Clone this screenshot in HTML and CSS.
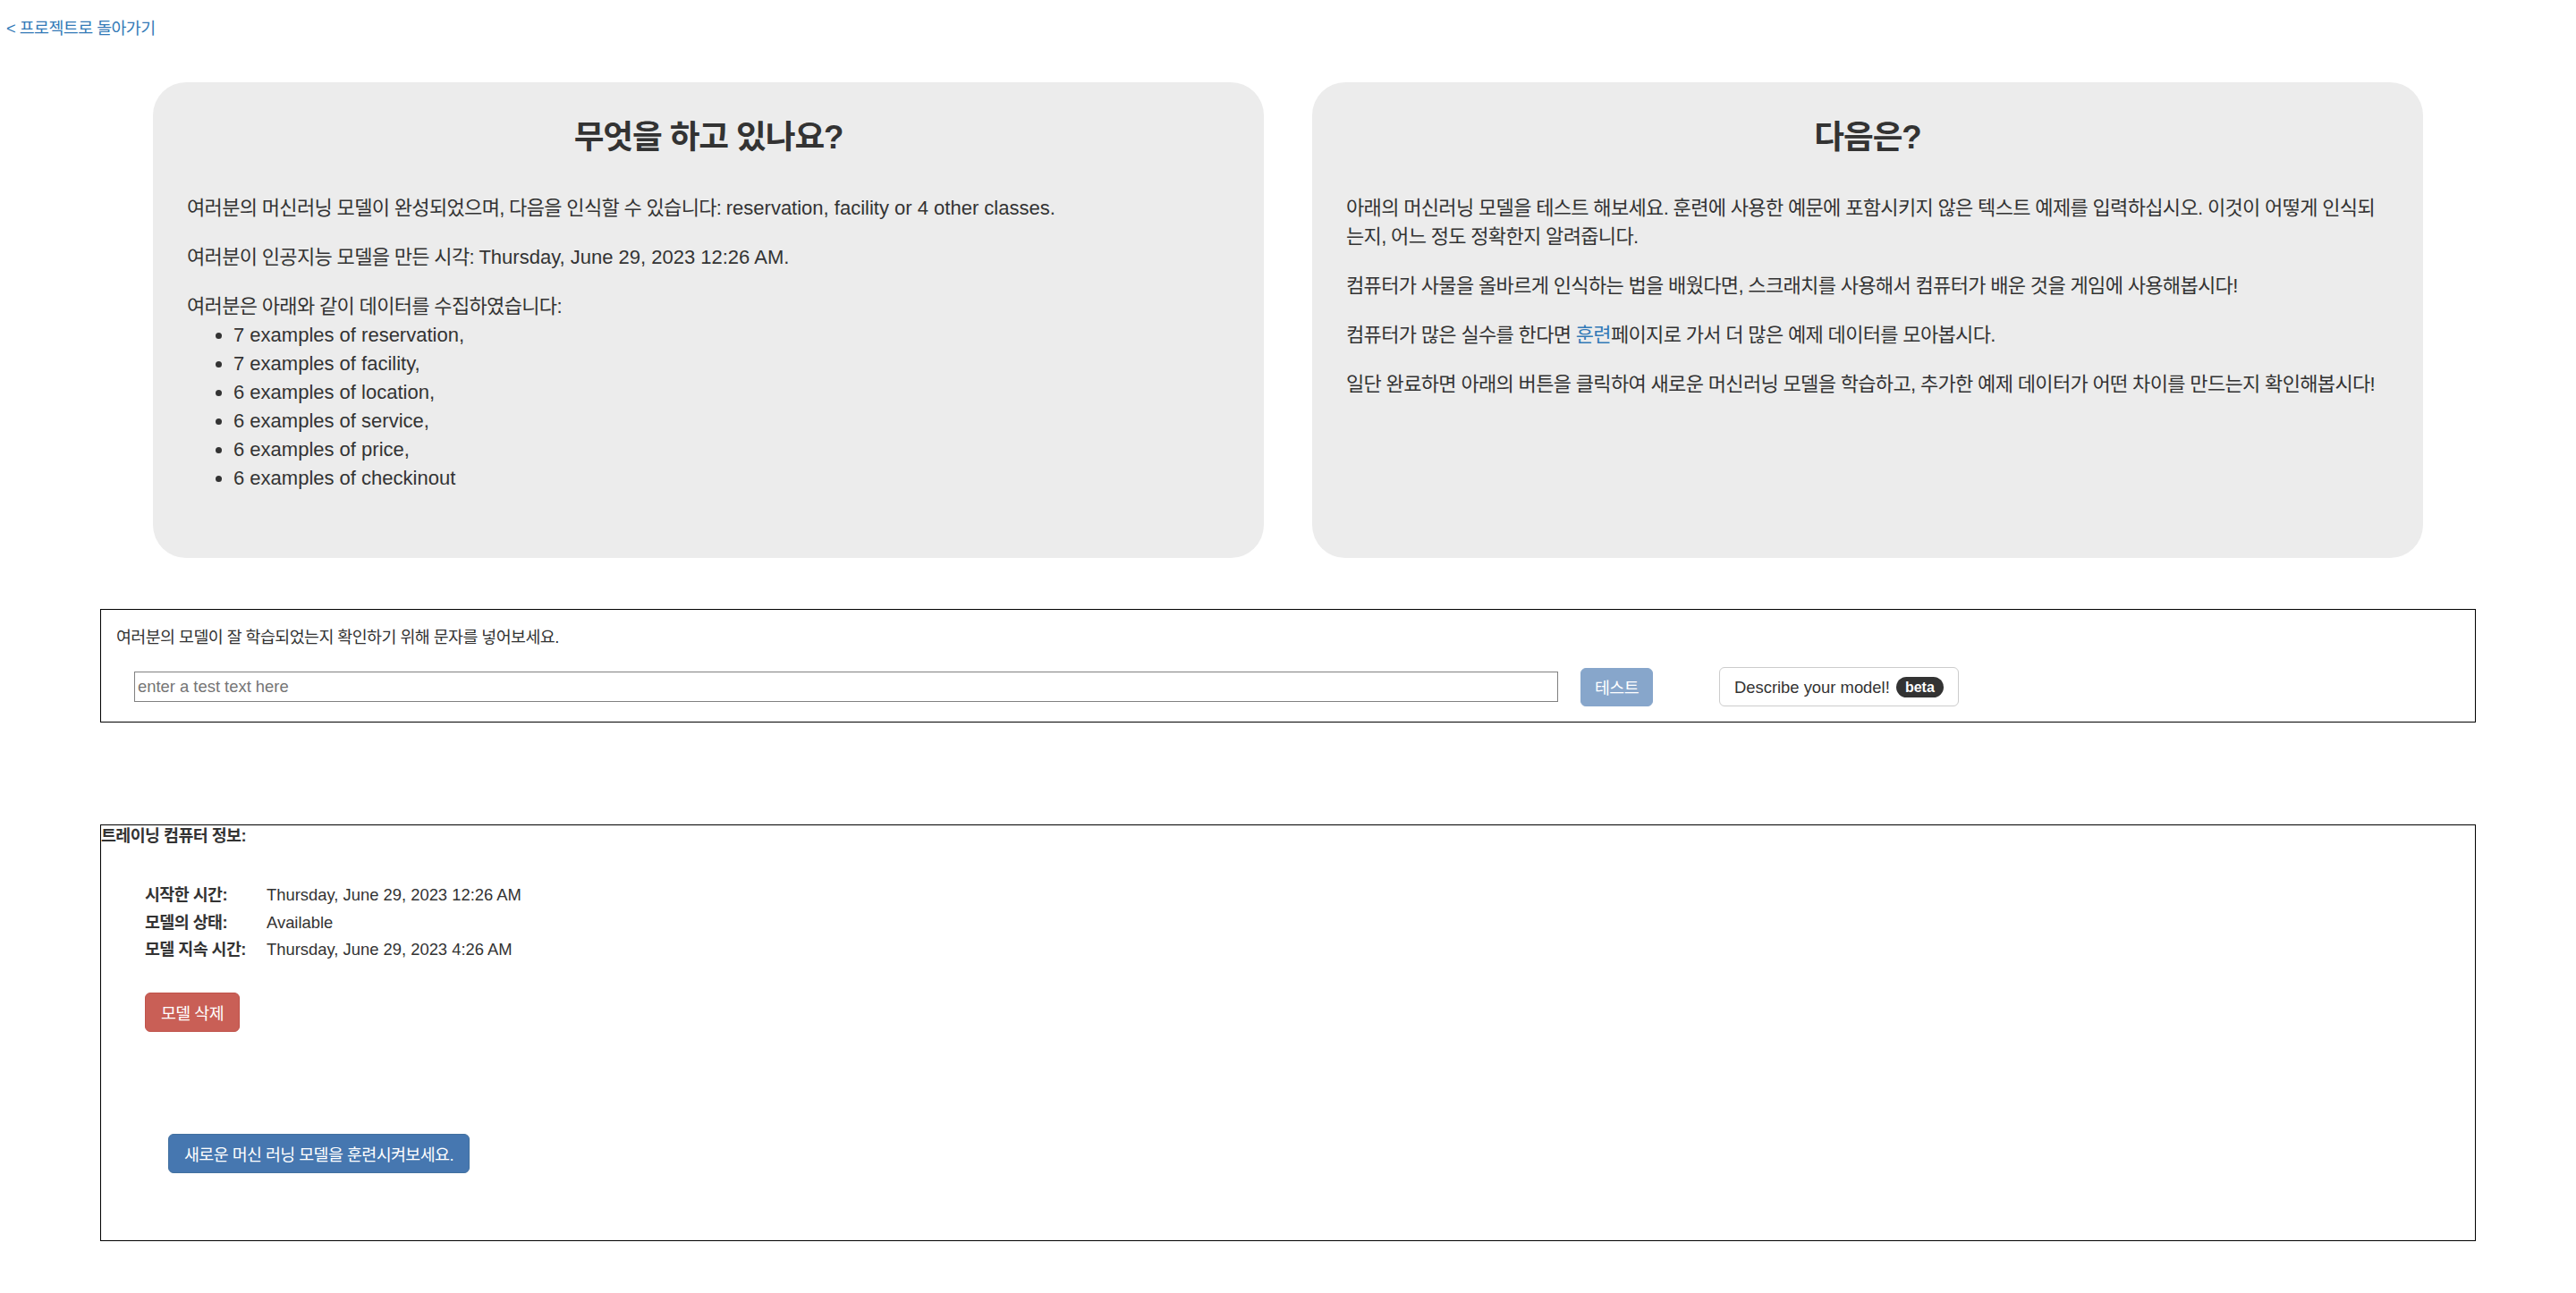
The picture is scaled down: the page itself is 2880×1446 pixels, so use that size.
FILE: index.html
```html
<!DOCTYPE html>
<html lang="ko">
<head>
    <meta charset="UTF-8">
    <meta name="viewport" content="width=device-width, initial-scale=1.0">
    <title>모델 테스트</title>
    <link rel="stylesheet" href="styles.css">
</head>
<body>

    <a class="back-link" href="#">&lt; 프로젝트로 돌아가기</a>

    <div class="cards">
        <div class="card">
            <h2 class="card-title">무엇을 하고 있나요?</h2>
            <p>여러분의 머신러닝 모델이 완성되었으며, 다음을 인식할 수 있습니다: <span lang="en">reservation, facility or 4 other classes.</span></p>
            <p>여러분이 인공지능 모델을 만든 시각: <span lang="en">Thursday, June 29, 2023 12:26 AM.</span></p>
            <div class="collected">
                여러분은 아래와 같이 데이터를 수집하였습니다:
                <ul lang="en">
                    <li>7 examples of reservation,</li>
                    <li>7 examples of facility,</li>
                    <li>6 examples of location,</li>
                    <li>6 examples of service,</li>
                    <li>6 examples of price,</li>
                    <li>6 examples of checkinout</li>
                </ul>
            </div>
        </div>

        <div class="card">
            <h2 class="card-title">다음은?</h2>
            <p>아래의 머신러닝 모델을 테스트 해보세요. 훈련에 사용한 예문에 포함시키지 않은 텍스트 예제를 입력하십시오. 이것이 어떻게 인식되는지, 어느 정도 정확한지 알려줍니다.</p>
            <p>컴퓨터가 사물을 올바르게 인식하는 법을 배웠다면, 스크래치를 사용해서 컴퓨터가 배운 것을 게임에 사용해봅시다!</p>
            <p>컴퓨터가 많은 실수를 한다면 <a href="#">훈련</a>페이지로 가서 더 많은 예제 데이터를 모아봅시다.</p>
            <p>일단 완료하면 아래의 버튼을 클릭하여 새로운 머신러닝 모델을 학습하고, 추가한 예제 데이터가 어떤 차이를 만드는지 확인해봅시다!</p>
        </div>
    </div>

    <div class="test-box">
        <p class="test-label">여러분의 모델이 잘 학습되었는지 확인하기 위해 문자를 넣어보세요.</p>
        <div class="test-row">
            <input type="text" class="test-input" lang="en" placeholder="enter a test text here">
            <button class="btn btn-test" disabled>테스트</button>
            <button class="btn btn-describe" lang="en">Describe your model! <span class="badge">beta</span></button>
        </div>
    </div>

    <div class="train-box">
        <div class="train-title">트레이닝 컴퓨터 정보:</div>
        <dl class="info">
            <dt>시작한 시간:</dt>
            <dd lang="en">Thursday, June 29, 2023 12:26 AM</dd>
            <dt>모델의 상태:</dt>
            <dd lang="en">Available</dd>
            <dt>모델 지속 시간:</dt>
            <dd lang="en">Thursday, June 29, 2023 4:26 AM</dd>
        </dl>
        <div class="delete-row">
            <button class="btn btn-danger">모델 삭제</button>
        </div>
        <div class="train-row">
            <button class="btn btn-primary">새로운 머신 러닝 모델을 훈련시켜보세요.</button>
        </div>
    </div>

</body>
</html>
```

FILE: styles.css
```css
body {
    margin: 0;
    font-family: 'Liberation Sans', 'Noto Sans CJK KR', sans-serif;
    font-size: 18.4px;
    letter-spacing: -0.03em;
    color: #333;
    background-color: #fff;
}
/* 영어 문장은 원래 자간 그대로 */
[lang="en"] {
    letter-spacing: normal;
}
a {
    color: #337ab7;
    text-decoration: none;
}
.back-link {
    display: block;
    width: max-content;
    padding: 19px 0 0 7px;
    line-height: 26px;
}

/* 위쪽 두 개의 회색 카드 */
.cards {
    display: flex;
    gap: 54px;
    margin: 47px 171px 0;
}
.card {
    flex: 1;
    background-color: #ececec;
    border-radius: 37px;
    padding: 41px 38px 73px;
    font-size: 22px;
    letter-spacing: -0.03em;
    line-height: 32px;
}
.card-title {
    margin: 0 0 43px;
    font-size: 36.7px;
    letter-spacing: -0.03em;
    line-height: 41px;
    font-weight: bold;
    text-align: center;
}
.card p {
    margin: 0 0 23px;
}
.collected ul {
    margin: 0;
    padding-left: 52px;
}

/* 테스트 입력 영역 */
.test-box {
    margin: 57px 112px 0;
    border: 1px solid #000;
    padding: 18px 17px 17px;
}
.test-label {
    margin: 0 0 20px;
    line-height: 26px;
}
.test-row {
    display: flex;
    align-items: center;
    height: 44px;
}
.test-input {
    width: 1592px;
    height: 34px;
    margin-left: 20px;
    box-sizing: border-box;
    border: 1px solid #808080;
    padding: 0 3px;
    font-family: 'Liberation Sans', sans-serif;
    font-size: 18.4px;
    color: #333;
}
.test-input::placeholder {
    color: #757575;
}
.btn {
    height: 44px;
    padding: 0 17px;
    border: 1px solid transparent;
    border-radius: 6px;
    font-family: 'Liberation Sans', 'Noto Sans CJK KR', sans-serif;
    font-size: 18.4px;
    letter-spacing: -0.03em;
    cursor: pointer;
}
.btn-test {
    width: 81px;
    height: 43px;
    margin-left: 25px;
    padding: 0;
    background-color: #87a6cb;
    border-color: #87a6cb;
    color: #fff;
    cursor: default;
}
.btn-describe {
    margin-left: 74px;
    padding: 0 16px;
    background-color: #fff;
    border-color: #ccc;
    color: #333;
    letter-spacing: normal;
}
.badge {
    display: inline-block;
    margin-left: 2px;
    padding: 0 10px;
    height: 23px;
    line-height: 23px;
    border-radius: 12px;
    background-color: #333;
    color: #fff;
    font-size: 16px;
    font-weight: bold;
    vertical-align: 1px;
}

/* 트레이닝 정보 영역 */
.train-box {
    margin: 114px 112px 0;
    border: 1px solid #000;
    padding: 0 0 75px;
}
.train-title {
    font-weight: bold;
    line-height: 22px;
    padding-top: 1px;
}
.info {
    display: grid;
    grid-template-columns: 136px auto;
    margin: 40px 0 0 49px;
    line-height: 30.5px;
}
.info dt {
    font-weight: bold;
}
.info dd {
    margin: 0;
}
.delete-row {
    margin: 32px 0 0 49px;
}
.train-row {
    margin: 114px 0 0 75px;
}
.btn-danger {
    background-color: #c95f56;
    border-color: #c0534b;
    color: #fff;
}
.btn-primary {
    background-color: #4677b0;
    border-color: #41709f;
    color: #fff;
}
```
